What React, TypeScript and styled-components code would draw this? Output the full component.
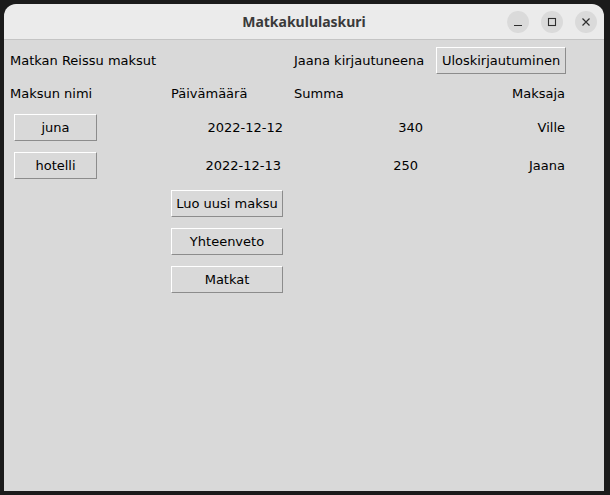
import React from "react";
import styled, { createGlobalStyle } from "styled-components";

const Global = createGlobalStyle`
  html, body {
    margin: 0;
    padding: 0;
    width: 610px;
    height: 495px;
    overflow: hidden;
    background: #1b1b1b;
  }
  #root { width: 610px; height: 495px; }
`;

const Screen = styled.div`
  width: 610px;
  height: 495px;
  box-sizing: border-box;
  padding: 4px 0 0 4px;
  background: #1b1b1b;
`;

const Window = styled.div`
  width: 600px;
  height: 487px;
  display: flex;
  flex-direction: column;
  border-radius: 12px 12px 0 0;
  overflow: hidden;
`;

const TitleBar = styled.div`
  height: 35px;
  flex: none;
  background: #ebebeb;
  border-bottom: 1px solid #c4c4c4;
  display: grid;
  grid-template-columns: 1fr auto 1fr;
  align-items: center;
`;

const Title = styled.div`
  grid-column: 2;
  font-family: "Noto Sans", "DejaVu Sans", sans-serif;
  font-weight: 700;
  font-size: 14px;
  color: #3a3a3a;
`;

const Controls = styled.div`
  grid-column: 3;
  justify-self: end;
  display: flex;
  gap: 12px;
  padding-right: 7px;
`;

const CircleBtn = styled.div`
  width: 22px;
  height: 22px;
  border-radius: 50%;
  background: #dadada;
  display: flex;
  align-items: center;
  justify-content: center;
  color: #2e2e2e;
`;

const Body = styled.div`
  flex: 1;
  background: #d9d9d9;
  display: grid;
  grid-template-columns: 162px 122px 143px 139px;
  grid-template-rows: 38px 29px 38px 38px 38px 38px 38px;
  align-content: start;
  padding-top: 1px;
  font-family: "DejaVu Sans", sans-serif;
  font-size: 13px;
  color: #000;
`;

type Place = {
  $col: number;
  $row: number;
  $align?: "start" | "end";
  $pl?: number;
  $pr?: number;
};

const Cell = styled.div<Place>`
  grid-column: ${(p) => p.$col};
  grid-row: ${(p) => p.$row};
  justify-self: ${(p) => p.$align ?? "start"};
  align-self: center;
  padding-left: ${(p) => p.$pl ?? 0}px;
  padding-right: ${(p) => p.$pr ?? 0}px;
  white-space: nowrap;
`;

const TkButton = styled.button<Place & { $w: number }>`
  grid-column: ${(p) => p.$col};
  grid-row: ${(p) => p.$row};
  justify-self: start;
  align-self: center;
  margin-left: ${(p) => p.$pl ?? 0}px;
  width: ${(p) => p.$w}px;
  height: 27px;
  box-sizing: border-box;
  padding: 0;
  background: #d9d9d9;
  border: 1px solid;
  border-color: #ffffff #8c8c8c #8c8c8c #ffffff;
  font-family: "DejaVu Sans", sans-serif;
  font-size: 13px;
  color: #000;
  white-space: nowrap;
`;

const payments = [
  { name: "juna", date: "2022-12-12", datePr: 5, sum: "340", sumPr: 8, payer: "Ville" },
  { name: "hotelli", date: "2022-12-13", datePr: 7, sum: "250", sumPr: 13, payer: "Jaana" },
];

export default function App() {
  return (
    <>
      <Global />
      <Screen>
        <Window>
          <TitleBar>
            <Title>Matkakululaskuri</Title>
            <Controls>
              <CircleBtn>
                <svg width="10" height="10" viewBox="0 0 10 10">
                  <path d="M1 8.5h8" stroke="currentColor" strokeWidth="1.2" />
                </svg>
              </CircleBtn>
              <CircleBtn>
                <svg width="10" height="10" viewBox="0 0 10 10">
                  <rect x="1.5" y="1.5" width="7" height="7" fill="none" stroke="currentColor" strokeWidth="1.1" />
                </svg>
              </CircleBtn>
              <CircleBtn>
                <svg width="10" height="10" viewBox="0 0 10 10">
                  <path d="M1.5 1.5l7 7M8.5 1.5l-7 7" stroke="currentColor" strokeWidth="1.2" />
                </svg>
              </CircleBtn>
            </Controls>
          </TitleBar>
          <Body>
            <Cell $col={1} $row={1} $pl={6}>Matkan Reissu maksut</Cell>
            <Cell $col={3} $row={1} $pl={6}>Jaana kirjautuneena</Cell>
            <TkButton $col={4} $row={1} $pl={5} $w={130}>Uloskirjautuminen</TkButton>

            <Cell $col={1} $row={2} $pl={6}>Maksun nimi</Cell>
            <Cell $col={2} $row={2} $pl={5}>Päivämäärä</Cell>
            <Cell $col={3} $row={2} $pl={6}>Summa</Cell>
            <Cell $col={4} $row={2} $align="end" $pr={5}>Maksaja</Cell>

            {payments.map((p, i) => (
              <React.Fragment key={p.name}>
                <TkButton $col={1} $row={3 + i} $pl={10} $w={83}>{p.name}</TkButton>
                <Cell $col={2} $row={3 + i} $align="end" $pr={p.datePr}>{p.date}</Cell>
                <Cell $col={3} $row={3 + i} $align="end" $pr={p.sumPr}>{p.sum}</Cell>
                <Cell $col={4} $row={3 + i} $align="end" $pr={5}>{p.payer}</Cell>
              </React.Fragment>
            ))}

            <TkButton $col={2} $row={5} $pl={5} $w={112}>Luo uusi maksu</TkButton>
            <TkButton $col={2} $row={6} $pl={5} $w={112}>Yhteenveto</TkButton>
            <TkButton $col={2} $row={7} $pl={5} $w={112}>Matkat</TkButton>
          </Body>
        </Window>
      </Screen>
    </>
  );
}
